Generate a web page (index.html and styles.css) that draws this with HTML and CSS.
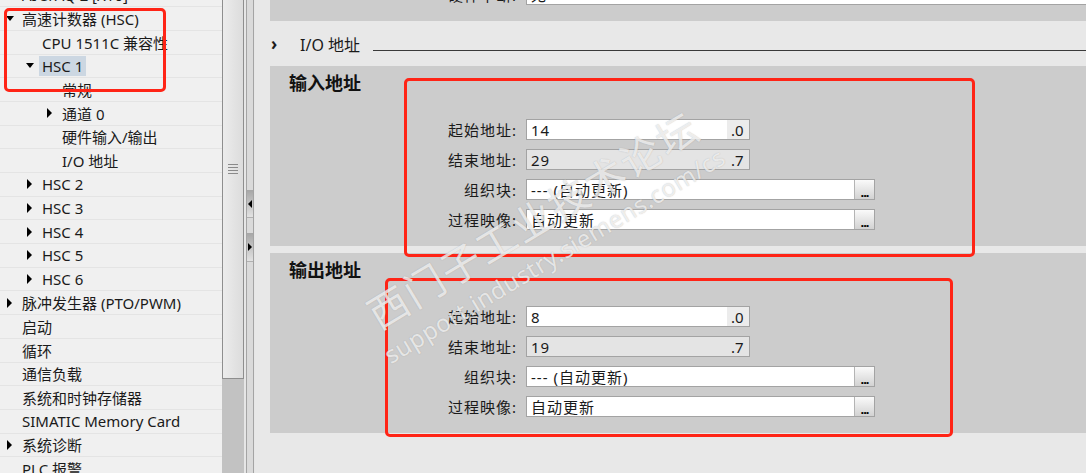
FILE: index.html
```html
<!DOCTYPE html>
<html lang="zh-CN">
<head>
  <meta charset="UTF-8">
  <meta name="viewport" content="width=device-width, initial-scale=1.0">
  <title>HSC 1 - I/O 地址</title>
  <link rel="stylesheet" href="styles.css">
</head>
<body>
  <div class="app">
    <div class="tree">
      <ul class="tree-list">
        <li class="node lv0"><span class="tw closed"></span>AI 5/AQ 2 [X10]</li>
        <li class="node lv0"><span class="tw open"></span>高速计数器 (HSC)</li>
        <li class="node lv1"><span class="tw"></span>CPU 1511C 兼容性</li>
        <li class="node lv1"><span class="tw open"></span><span class="sel">HSC 1</span></li>
        <li class="node lv2"><span class="tw"></span>常规</li>
        <li class="node lv2"><span class="tw closed"></span>通道 0</li>
        <li class="node lv2"><span class="tw"></span>硬件输入/输出</li>
        <li class="node lv2"><span class="tw"></span>I/O 地址</li>
        <li class="node lv1"><span class="tw closed"></span>HSC 2</li>
        <li class="node lv1"><span class="tw closed"></span>HSC 3</li>
        <li class="node lv1"><span class="tw closed"></span>HSC 4</li>
        <li class="node lv1"><span class="tw closed"></span>HSC 5</li>
        <li class="node lv1"><span class="tw closed"></span>HSC 6</li>
        <li class="node lv0"><span class="tw closed"></span>脉冲发生器 (PTO/PWM)</li>
        <li class="node lv0"><span class="tw"></span>启动</li>
        <li class="node lv0"><span class="tw"></span>循环</li>
        <li class="node lv0"><span class="tw"></span>通信负载</li>
        <li class="node lv0"><span class="tw"></span>系统和时钟存储器</li>
        <li class="node lv0"><span class="tw"></span>SIMATIC Memory Card</li>
        <li class="node lv0"><span class="tw closed"></span>系统诊断</li>
        <li class="node lv0"><span class="tw"></span>PLC 报警</li>
      </ul>
    </div>

    <div class="vscroll">
      <div class="thumb"><span class="grip"></span></div>
    </div>

    <div class="splitter">
      <div class="split-bar">
        <div class="split-btn btn-left"><span class="arr-left"></span></div>
        <div class="split-btn btn-right"><span class="arr-right"></span></div>
      </div>
    </div>

    <div class="main">
      <div class="panel top-panel">
        <div class="form cut">
          <label>硬件中断:</label>
          <div class="field full"><span class="val">无</span></div>
        </div>
      </div>

      <div class="section-head">
        <span class="chev">›</span>
        <span class="sec-title">I/O 地址</span>
        <span class="rule"></span>
      </div>

      <div class="panel group">
        <h2>输入地址</h2>
        <div class="form">
          <label>起始地址:</label>
          <div class="field addr"><span class="val">14</span><span class="bit">.0</span></div>
          <label>结束地址:</label>
          <div class="field addr readonly"><span class="val">29</span><span class="bit">.7</span></div>
          <label>组织块:</label>
          <div class="field wide"><span class="val">--- (自动更新)</span><span class="more">...</span></div>
          <label>过程映像:</label>
          <div class="field wide"><span class="val">自动更新</span><span class="more">...</span></div>
        </div>
      </div>

      <div class="panel group">
        <h2>输出地址</h2>
        <div class="form">
          <label>起始地址:</label>
          <div class="field addr"><span class="val">8</span><span class="bit">.0</span></div>
          <label>结束地址:</label>
          <div class="field addr readonly"><span class="val">19</span><span class="bit">.7</span></div>
          <label>组织块:</label>
          <div class="field wide"><span class="val">--- (自动更新)</span><span class="more">...</span></div>
          <label>过程映像:</label>
          <div class="field wide"><span class="val">自动更新</span><span class="more">...</span></div>
        </div>
      </div>
    </div>
  </div>

  <!-- annotations drawn over the screenshot -->
  <div class="mark mark-tree"></div>
  <div class="mark mark-in"></div>
  <div class="mark mark-out"></div>

  <div class="watermark">
    <div class="wm-cn">西门子工业技术论坛</div>
    <div class="wm-url">support.industry.siemens.com/cs</div>
  </div>
</body>
</html>
```

FILE: styles.css
```css
* {
  box-sizing: border-box;
}
html, body {
  margin: 0;
  padding: 0;
}
body {
  width: 1086px;
  height: 473px;
  overflow: hidden;
  position: relative;
  font-family: "Noto Sans", "Noto Sans CJK SC", sans-serif;
  font-size: 15px;
  color: #1a1a1a;
  background: #e8e8e8;
}
.app {
  display: flex;
  height: 473px;
}

/* project tree */
.tree {
  width: 222px;
  background: #f0f0f0;
  overflow: hidden;
}
.tree-list {
  list-style: none;
  margin: -16.5px 0 0;
  padding: 0;
}
.node {
  height: 23.7px;
  display: flex;
  align-items: center;
  padding-left: 2px;
  border-bottom: 1px solid #e4e4e4;
  white-space: nowrap;
}
.lv1 {
  padding-left: 22px;
}
.lv2 {
  padding-left: 42px;
}
.tw {
  width: 15px;
  margin-right: 5px;
  display: flex;
  justify-content: center;
  align-items: center;
  flex-shrink: 0;
}
.tw.open::before {
  content: "";
  border-left: 4px solid transparent;
  border-right: 4px solid transparent;
  border-top: 5px solid #000;
}
.tw.closed::before {
  content: "";
  border-top: 5px solid transparent;
  border-bottom: 5px solid transparent;
  border-left: 5px solid #000;
}
.sel {
  background: #ccd7e2;
  margin-left: -3px;
  padding: 0 3px;
  line-height: 20px;
}

/* tree scrollbar */
.vscroll {
  width: 22px;
  background: #c2c2c2;
}
.thumb {
  height: 379px;
  border: 1px solid #8e8e8e;
  border-top: none;
  background: linear-gradient(to right, #ececec, #dcdcdc);
  display: flex;
  justify-content: center;
  padding-top: 164px;
}
.grip {
  width: 10px;
  height: 10px;
  background: repeating-linear-gradient(to bottom, #8a8a8a 0, #8a8a8a 1px, transparent 1px, transparent 3px);
}

/* splitter between tree and editor */
.splitter {
  width: 11px;
  background: #e6e6e6;
  padding-left: 2px;
}
.split-bar {
  width: 8px;
  height: 100%;
  border-left: 1px solid #a4a4a4;
  border-right: 1px solid #a4a4a4;
  background: #dadada;
  padding-top: 190px;
}
.split-btn {
  height: 28px;
  background: linear-gradient(to bottom, #a6a6a6, #e2e2e2);
  border-bottom: 1px solid #b0b0b0;
  display: flex;
  align-items: center;
  justify-content: center;
}
.btn-right {
  margin-top: 15px;
  height: 29px;
}
.arr-left {
  border-top: 4px solid transparent;
  border-bottom: 4px solid transparent;
  border-right: 4px solid #000;
}
.arr-right {
  border-top: 4px solid transparent;
  border-bottom: 4px solid transparent;
  border-left: 4px solid #000;
}

/* editor */
.main {
  flex: 1;
  padding-left: 15px;
  overflow: hidden;
}
.panel {
  background: #cccccc;
}
.top-panel {
  height: 21px;
  overflow: hidden;
}
.form {
  display: grid;
  grid-template-columns: 247px auto;
  grid-auto-rows: 21px;
  column-gap: 9px;
  row-gap: 9px;
  align-items: center;
}
.form.cut {
  margin-top: -16px;
}
.form label {
  justify-self: end;
  white-space: nowrap;
  letter-spacing: 1px;
}
.field {
  height: 21px;
  display: flex;
  align-items: center;
  background: #fff;
  border: 1px solid #a3a3a3;
}
.field .val {
  flex: 1;
  padding-left: 4px;
  white-space: nowrap;
  letter-spacing: 1px;
}
.field.addr {
  width: 224px;
}
.field.wide {
  width: 349px;
}
.field.full {
  width: 600px;
}
.field.readonly {
  background: #e4e4e4;
}
.bit {
  width: 22px;
  height: 100%;
  display: flex;
  align-items: center;
  padding-left: 4px;
  background: #ececec;
}
.readonly .bit {
  background: transparent;
}
.more {
  width: 20px;
  height: 19px;
  border-left: 1px solid #b4b4b4;
  background: linear-gradient(to bottom, #fafafa, #d2d2d2);
  font-weight: bold;
  font-size: 13px;
  line-height: 24px;
  text-align: center;
  letter-spacing: -1px;
  color: #000;
}

.section-head {
  height: 45px;
  display: flex;
  align-items: center;
}
.chev {
  margin-left: 1px;
  width: 29px;
  font-size: 17px;
  font-weight: bold;
}
.sec-title {
  font-size: 16px;
}
.rule {
  flex: 1;
  height: 1px;
  margin: 13px 0 0 13px;
  background: #3a3a3a;
}

.group {
  height: 180px;
  padding-top: 5px;
  margin-bottom: 7px;
}
.group h2 {
  margin: 0 0 24px;
  padding-left: 19px;
  font-size: 18px;
  line-height: 24px;
  font-weight: bold;
  color: #111;
}

/* red annotation frames */
.mark {
  position: absolute;
  border: 3px solid #ff2416;
  border-radius: 5px;
}
.mark-tree {
  left: 4px;
  top: 8px;
  width: 162px;
  height: 84px;
}
.mark-in {
  left: 404px;
  top: 78px;
  width: 571px;
  height: 179px;
}
.mark-out {
  left: 385px;
  top: 278px;
  width: 568px;
  height: 159px;
}

/* forum watermark */
.watermark {
  position: absolute;
  left: 542px;
  top: 235px;
  transform: translate(-50%, -50%) rotate(-31deg);
  text-align: center;
  color: rgba(255, 255, 255, 0.72);
  text-shadow: 0 0 1px rgba(110, 110, 110, 0.45);
  white-space: nowrap;
  pointer-events: none;
}
.wm-cn {
  font-size: 40px;
  line-height: 44px;
  letter-spacing: 2px;
}
.wm-url {
  margin-top: 4px;
  font-size: 24px;
  line-height: 30px;
  letter-spacing: 0.6px;
}
```
